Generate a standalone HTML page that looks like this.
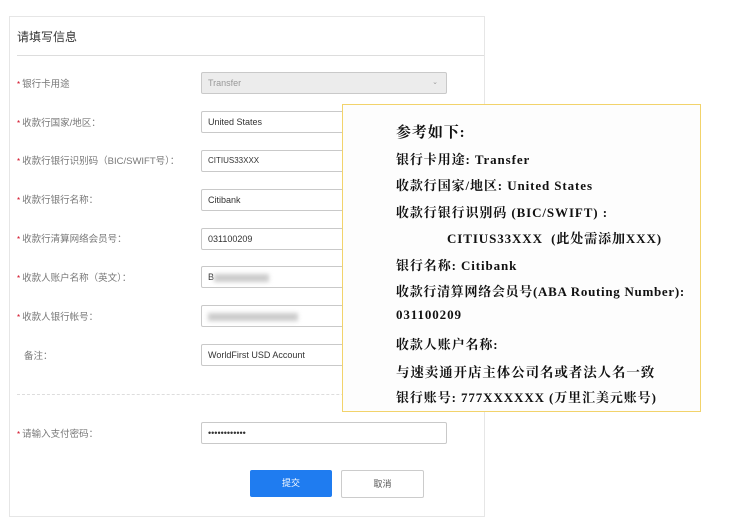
<!DOCTYPE html>
<html><head><meta charset="utf-8"><style>
body{margin:0;width:745px;height:532px;background:#fff;position:relative;overflow:hidden;font-family:"Liberation Sans","Noto Sans CJK SC",sans-serif;}
.card{position:absolute;left:9px;top:16px;width:474px;height:499px;border:1px solid #e6e6e6;}
.abs{position:absolute}
.lbl{position:absolute;left:17px;font-size:9.5px;color:#777;line-height:15px}
.lbl i{color:#d0021b;font-style:normal;font-size:8px;margin-right:2px}
.inp{position:absolute;left:201px;border:1px solid #c9c9c9;border-radius:2px;font-size:9px;color:#333;line-height:20px;padding-left:6px;box-sizing:border-box;width:246px;height:22px}
.ov{position:absolute;left:342px;top:104px;width:357px;height:306px;border:1.5px solid #f2d36b;background:#fdfdfd;}
.ov div{position:absolute;left:53px;font-family:"Liberation Serif","Noto Serif CJK SC",serif;font-size:13px;color:#111;white-space:nowrap;font-weight:bold;letter-spacing:0.9px}
</style></head><body>
<div class="card"></div>
<div class="abs" style="left:17px;top:28px;font-size:12px;color:#333">请填写信息</div>
<div class="abs" style="left:17px;top:55px;width:467px;height:1px;background:#ddd"></div>
<div class="lbl" style="top:77px"><i>*</i>银行卡用途</div>
<div class="lbl" style="top:116px"><i>*</i>收款行国家/地区：</div>
<div class="lbl" style="top:154px"><i>*</i>收款行银行识别码（BIC/SWIFT号）：</div>
<div class="lbl" style="top:193px"><i>*</i>收款行银行名称：</div>
<div class="lbl" style="top:232px"><i>*</i>收款行清算网络会员号：</div>
<div class="lbl" style="top:271px"><i>*</i>收款人账户名称（英文）：</div>
<div class="lbl" style="top:310px"><i>*</i>收款人银行帐号：</div>
<div class="lbl" style="top:349px;left:24px">备注：</div>
<div class="lbl" style="top:427px"><i>*</i>请输入支付密码：</div>
<div class="inp" style="top:72px;background:#ececec;color:#999">Transfer<span style="position:absolute;right:8px;font-size:7px">⌄</span></div>
<div class="inp" style="top:111px">United States</div>
<div class="inp" style="top:150px;font-size:8px">CITIUS33XXX</div>
<div class="inp" style="top:189px">Citibank</div>
<div class="inp" style="top:228px">031100209</div>
<div class="inp" style="top:266px">B<span style="display:inline-block;width:55px;height:8px;background:#ccc;filter:blur(2px);vertical-align:middle"></span></div>
<div class="inp" style="top:305px"><span style="display:inline-block;width:90px;height:8px;background:#ccc;filter:blur(2px);vertical-align:middle"></span></div>
<div class="inp" style="top:344px">WorldFirst USD Account</div>
<div class="abs" style="left:17px;top:394px;width:467px;border-top:1px dashed #ddd"></div>
<div class="inp" style="top:422px;font-size:9px;letter-spacing:0px">••••••••••••</div>
<div class="abs" style="left:250px;top:470px;width:82px;height:27px;background:#1f7cf0;border-radius:2px;color:#fff;font-size:9px;text-align:center;line-height:27px">提交</div>
<div class="abs" style="left:341px;top:470px;width:81px;height:26px;border:1px solid #ccc;border-radius:2px;color:#555;font-size:9px;text-align:center;line-height:26px">取消</div>
<div class="ov">
<div style="top:16px;font-size:15px">参考如下:</div>
<div style="top:44px">银行卡用途: Transfer</div>
<div style="top:70px">收款行国家/地区: United States</div>
<div style="top:97px">收款行银行识别码 (BIC/SWIFT) :</div>
<div style="top:123px;left:104px">CITIUS33XXX &nbsp;(此处需添加XXX)</div>
<div style="top:150px">银行名称: Citibank</div>
<div style="top:176px;letter-spacing:0.7px">收款行清算网络会员号(ABA Routing Number):</div>
<div style="top:202px">031100209</div>
<div style="top:229px">收款人账户名称:</div>
<div style="top:256px;font-size:13.5px">与速卖通开店主体公司名或者法人名一致</div>
<div style="top:282px">银行账号: 777XXXXXX (万里汇美元账号)</div>
</div>
</body></html>
